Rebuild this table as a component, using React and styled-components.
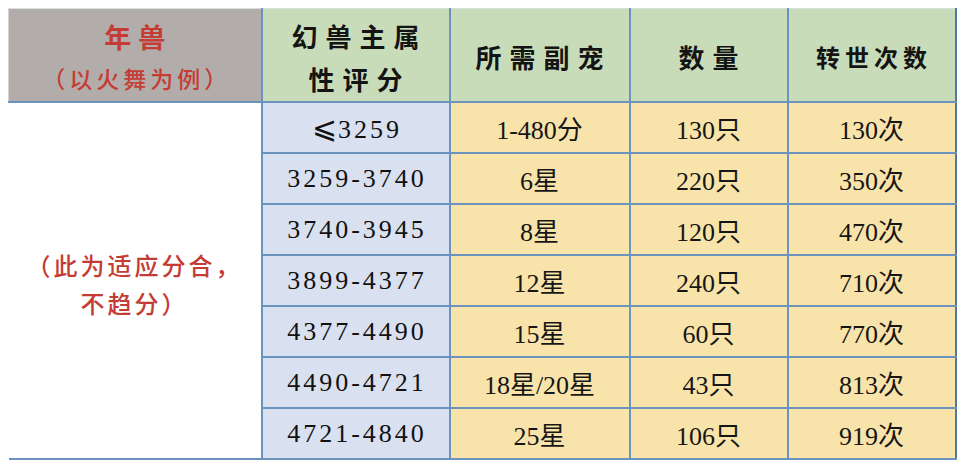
import styled, { createGlobalStyle } from "styled-components";

const GlobalStyle = createGlobalStyle`
  body {
    margin: 0;
    background: #fff;
    font-family: "Liberation Serif", "Noto Sans CJK SC", serif;
  }
`;

const rows = [
  { lte: true, score: "3259", pet: "1-480分", count: "130只", rebirth: "130次" },
  { score: "3259-3740", pet: "6星", count: "220只", rebirth: "350次" },
  { score: "3740-3945", pet: "8星", count: "120只", rebirth: "470次" },
  { score: "3899-4377", pet: "12星", count: "240只", rebirth: "710次" },
  { score: "4377-4490", pet: "15星", count: "60只", rebirth: "770次" },
  { score: "4490-4721", pet: "18星/20星", count: "43只", rebirth: "813次" },
  { score: "4721-4840", pet: "25星", count: "106只", rebirth: "919次" },
];

function App() {
  return (
    <>
      <GlobalStyle />
      <Page>
        <Table>
          <colgroup>
            <col style={{ width: 253 }} />
            <col style={{ width: 188 }} />
            <col style={{ width: 180 }} />
            <col style={{ width: 158 }} />
            <col style={{ width: 168 }} />
          </colgroup>
          <thead>
            <tr>
              <BeastHead>
                <RedTitle>年兽</RedTitle>
                <RedNote>（以火舞为例）</RedNote>
              </BeastHead>
              <Head>
                <HeadText>幻兽主属</HeadText>
                <HeadText>性评分</HeadText>
              </Head>
              <Head>
                <HeadText>所需副宠</HeadText>
              </Head>
              <Head>
                <HeadText>数量</HeadText>
              </Head>
              <Head>
                <HeadText $small>转世次数</HeadText>
              </Head>
            </tr>
          </thead>
          <tbody>
            {rows.map((r, i) => (
              <tr key={r.score}>
                {i === 0 && (
                  <NoteCell rowSpan={rows.length}>
                    <RedLine>（此为适应分合，</RedLine>
                    <RedLine>不趋分）</RedLine>
                  </NoteCell>
                )}
                <ScoreCell>
                  {r.lte && <Leq>⩽</Leq>}
                  {r.score}
                </ScoreCell>
                <DataCell>{r.pet}</DataCell>
                <DataCell>{r.count}</DataCell>
                <DataCell>{r.rebirth}</DataCell>
              </tr>
            ))}
          </tbody>
        </Table>
      </Page>
    </>
  );
}

const Page = styled.div`
  padding: 8px 0 0 8px;
`;

const Table = styled.table`
  border-collapse: collapse;
  table-layout: fixed;
  width: 947px;

  td,
  th {
    border: 2px solid #6a93bd;
    padding: 0;
    text-align: center;
    vertical-align: middle;
  }

  th {
    border-top: 1px solid #d9dede;
    font-weight: normal;
  }

  td {
    height: 49px;
  }

  td:last-child,
  th:last-child {
    border-right: 2px solid #4f7a9e;
  }
`;

const BeastHead = styled.th`
  background: #b2acab;
  border-left: 1px solid #d6d3d3 !important;
  color: #c43c33;
  height: 83px;
  vertical-align: top !important;
  padding-top: 9px !important;
`;

const RedTitle = styled.div`
  font-family: "Noto Sans CJK SC", sans-serif;
  font-size: 27px;
  font-weight: 700;
  letter-spacing: 7px;
  line-height: 38px;
  padding-left: 7px;
`;

const RedNote = styled.div`
  font-family: "Noto Sans CJK SC", sans-serif;
  font-size: 23px;
  font-weight: 500;
  letter-spacing: 4px;
  line-height: 45px;
  padding-left: 4px;
`;

const Head = styled.th`
  background: #c9dcb9;
  color: #141414;
  height: 89px;
  padding-top: 3px !important;
`;

const HeadText = styled.div`
  font-family: "Noto Sans CJK SC", sans-serif;
  font-size: ${(p) => (p.$small ? "24px" : "26px")};
  font-weight: 700;
  letter-spacing: ${(p) => (p.$small ? "5px" : "8px")};
  line-height: 43px;
  padding-left: ${(p) => (p.$small ? "5px" : "8px")};
`;

const NoteCell = styled.td`
  background: #fff;
  border-left: none !important;
  color: #c43c33;
  padding-top: 6px !important;
`;

const RedLine = styled.div`
  font-family: "Noto Sans CJK SC", sans-serif;
  font-size: 24px;
  font-weight: 500;
  letter-spacing: 3px;
  line-height: 38px;
`;

const ScoreCell = styled.td`
  background: #d9e0ef;
  color: #111;
  font-family: "Liberation Serif", serif;
  font-size: 26px;
  letter-spacing: 3px;
  padding-left: 3px !important;
`;

const Leq = styled.span`
  font-family: "DejaVu Sans", sans-serif;
  font-size: 30px;
  letter-spacing: 1px;
`;

const DataCell = styled.td`
  background: #f8e4aa;
  color: #161616;
  font-family: "Liberation Serif", "Noto Sans CJK SC", serif;
  font-size: 26px;
`;

export default App;
